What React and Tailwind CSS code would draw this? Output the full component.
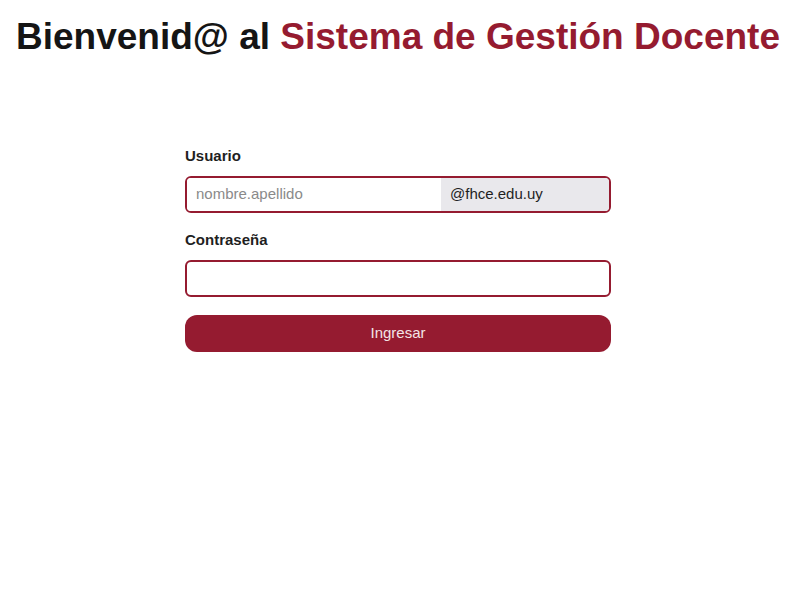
import React from 'react';

const App = () => {
  return (
    <div className="min-h-screen bg-white pr-[4px]" style={{ fontFamily: '"Liberation Sans", Arial, sans-serif' }}>
      <h1 className="pt-[14px] text-center text-[37px] font-bold leading-[46px] text-[#151515]">
        Bienvenid@ al <span className="text-[#951b30]">Sistema de Gestión Docente</span>
      </h1>

      <form className="mx-auto mt-[85px] w-[426px]" onSubmit={(e) => e.preventDefault()}>
        <label className="block text-[15px] font-bold text-[#1f1f1f]">Usuario</label>
        <div className="mt-[8px] flex h-[37px] overflow-hidden rounded-[6px] border-2 border-[#951b30]">
          <input
            className="min-w-0 flex-1 bg-white px-[9px] text-[15px] text-[#222] outline-none placeholder:text-[#8a8a8a]"
            placeholder="nombre.apellido"
          />
          <span className="flex w-[168px] items-center bg-[#e9e8ec] px-[9px] text-[15px] text-[#1f1f1f]">
            @fhce.edu.uy
          </span>
        </div>

        <label className="mt-[16px] block text-[15px] font-bold text-[#1f1f1f]">Contraseña</label>
        <input
          type="password"
          className="mt-[9px] block h-[37px] w-full rounded-[6px] border-2 border-[#951b30] px-[9px] outline-none"
        />

        <button
          type="submit"
          className="mt-[18px] h-[37px] w-full rounded-[12px] bg-[#951b30] text-[15px] text-[#f3e4e6]"
        >
          Ingresar
        </button>
      </form>
    </div>
  );
};

export default App;
